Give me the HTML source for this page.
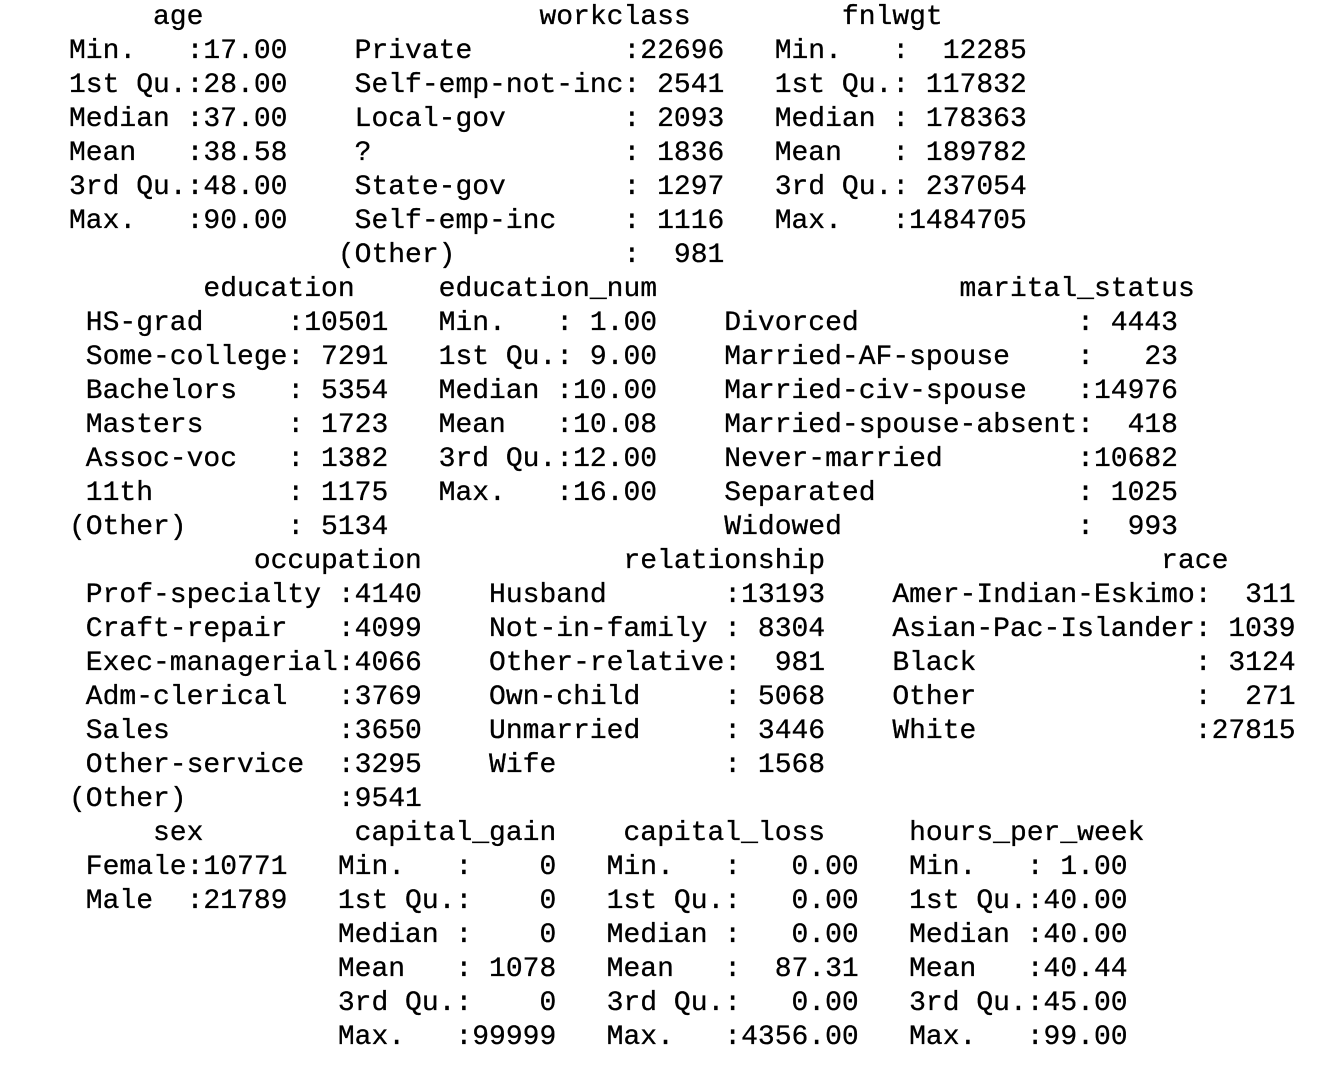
<!DOCTYPE html>
<html><head><meta charset="utf-8"><style>
html,body{margin:0;padding:0;background:#fff;width:1336px;height:1066px;overflow:hidden}
pre{margin:0;position:absolute;left:52.2px;top:1px;font-family:"Liberation Mono","DejaVu Sans Mono",monospace;font-size:28px;line-height:34px;color:#000;-webkit-text-stroke:0.3px #000}
</style></head><body><pre>      age                    workclass         fnlwgt
 Min.   :17.00    Private         :22696   Min.   :  12285
 1st Qu.:28.00    Self-emp-not-inc: 2541   1st Qu.: 117832
 Median :37.00    Local-gov       : 2093   Median : 178363
 Mean   :38.58    ?               : 1836   Mean   : 189782
 3rd Qu.:48.00    State-gov       : 1297   3rd Qu.: 237054
 Max.   :90.00    Self-emp-inc    : 1116   Max.   :1484705
                 (Other)          :  981
         education     education_num                  marital_status
  HS-grad     :10501   Min.   : 1.00    Divorced             : 4443
  Some-college: 7291   1st Qu.: 9.00    Married-AF-spouse    :   23
  Bachelors   : 5354   Median :10.00    Married-civ-spouse   :14976
  Masters     : 1723   Mean   :10.08    Married-spouse-absent:  418
  Assoc-voc   : 1382   3rd Qu.:12.00    Never-married        :10682
  11th        : 1175   Max.   :16.00    Separated            : 1025
 (Other)      : 5134                    Widowed              :  993
            occupation            relationship                    race
  Prof-specialty :4140    Husband       :13193    Amer-Indian-Eskimo:  311
  Craft-repair   :4099    Not-in-family : 8304    Asian-Pac-Islander: 1039
  Exec-managerial:4066    Other-relative:  981    Black             : 3124
  Adm-clerical   :3769    Own-child     : 5068    Other             :  271
  Sales          :3650    Unmarried     : 3446    White             :27815
  Other-service  :3295    Wife          : 1568
 (Other)         :9541
      sex         capital_gain    capital_loss     hours_per_week
  Female:10771   Min.   :    0   Min.   :   0.00   Min.   : 1.00
  Male  :21789   1st Qu.:    0   1st Qu.:   0.00   1st Qu.:40.00
                 Median :    0   Median :   0.00   Median :40.00
                 Mean   : 1078   Mean   :  87.31   Mean   :40.44
                 3rd Qu.:    0   3rd Qu.:   0.00   3rd Qu.:45.00
                 Max.   :99999   Max.   :4356.00   Max.   :99.00</pre></body></html>
